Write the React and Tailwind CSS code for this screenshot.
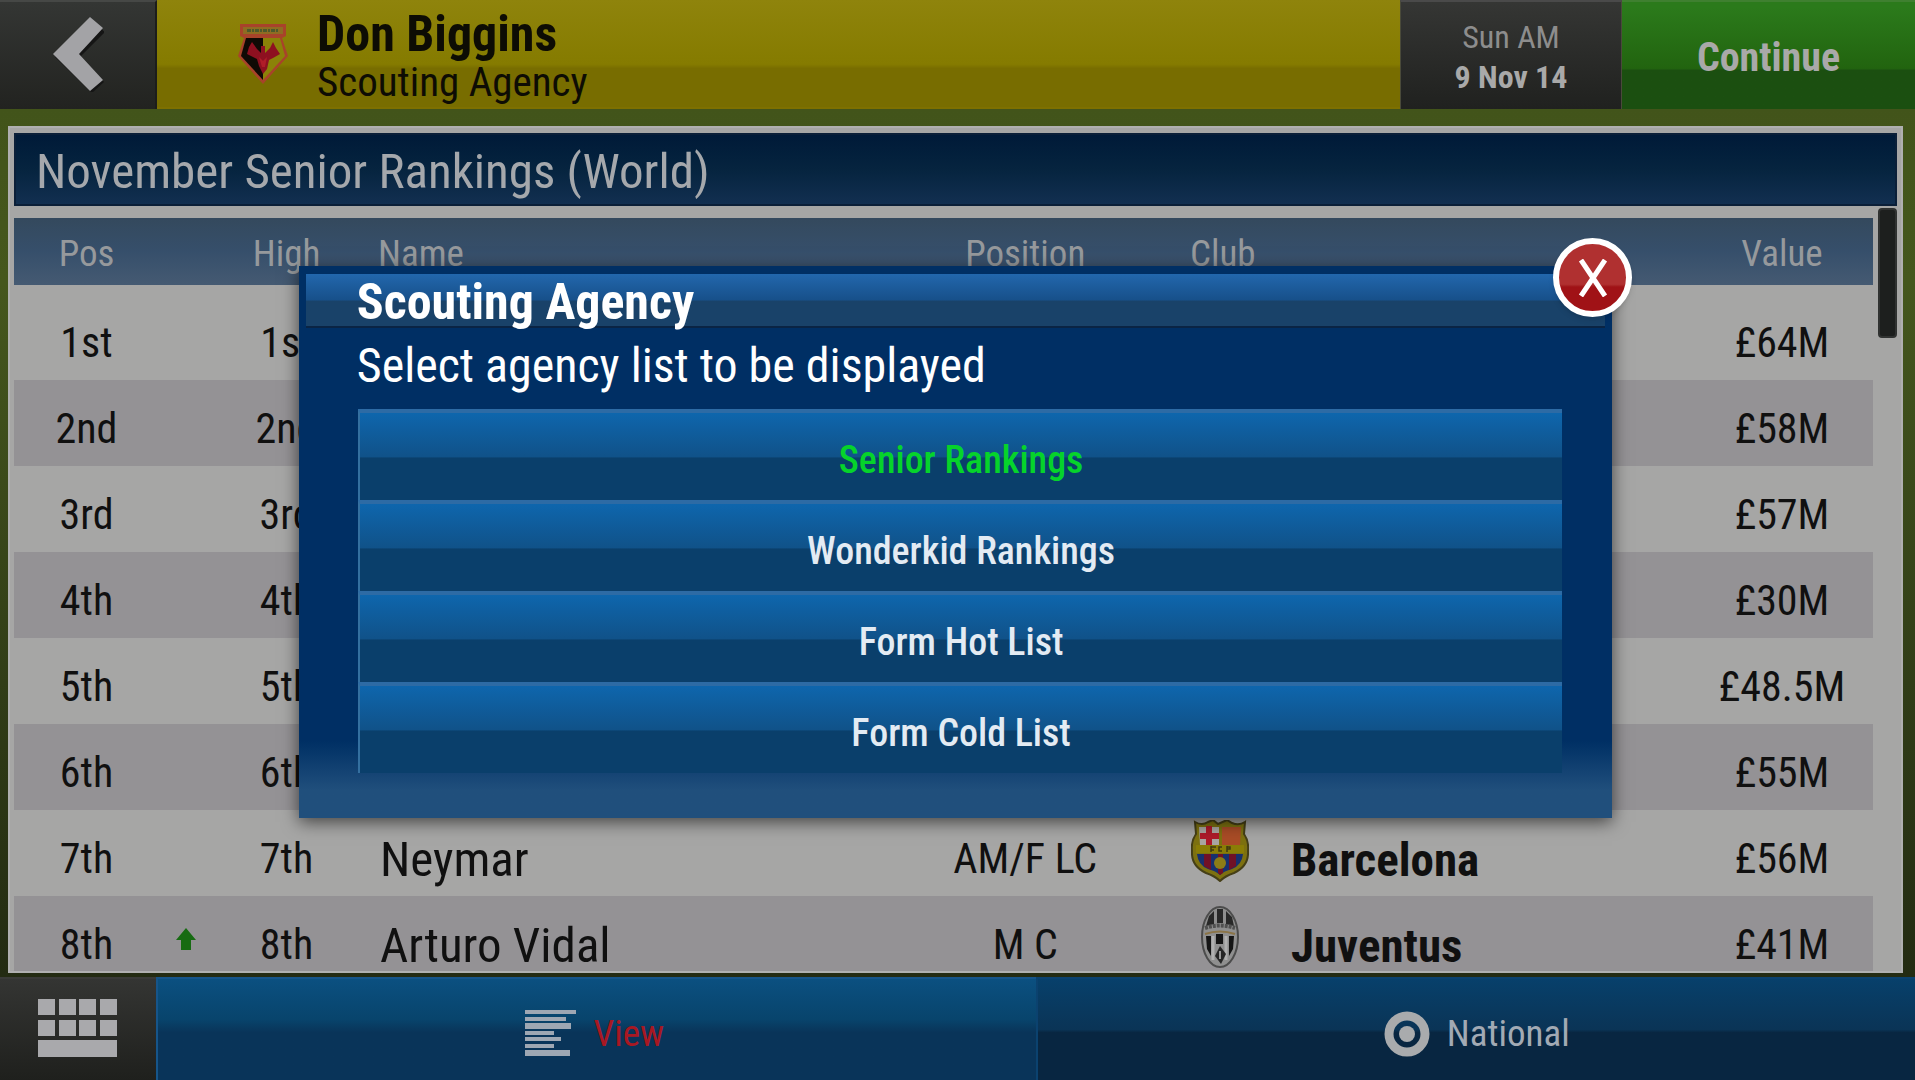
import { useState } from "react";

const players = [
  { pos: "1st", high: "1st", value: "£64M" },
  { pos: "2nd", high: "2nd", value: "£58M" },
  { pos: "3rd", high: "3rd", value: "£57M" },
  { pos: "4th", high: "4th", value: "£30M" },
  { pos: "5th", high: "5th", value: "£48.5M" },
  { pos: "6th", high: "6th", value: "£55M" },
  {
    pos: "7th",
    high: "7th",
    name: "Neymar",
    position: "AM/F LC",
    club: "Barcelona",
    Crest: BarcelonaCrest,
    value: "£56M",
  },
  {
    pos: "8th",
    up: true,
    high: "8th",
    name: "Arturo Vidal",
    position: "M C",
    club: "Juventus",
    Crest: JuventusCrest,
    value: "£41M",
  },
];

const lists = [
  "Senior Rankings",
  "Wonderkid Rankings",
  "Form Hot List",
  "Form Cold List",
];

function WatfordCrest() {
  return (
    <svg width="52" height="62" viewBox="0 0 52 62" aria-hidden="true">
      <path d="M3 1H49V13L45 15L51 33L26 61L1 33L7 15L3 13Z" fill="#a8432a" />
      <path d="M6 4H46V11H6Z" fill="#8f6c22" />
      <path d="M10 7.500H42" stroke="#4d5a2c" strokeWidth="3" strokeDasharray="4 1 2 1" />
      <path d="M9 15H26V57L4 33Z" fill="#100a05" />
      <path d="M26 15H43L48 33L26 57Z" fill="#8b8208" />
      <path
        d="M15 19L20 26L24 30V23H28V30L33 25L36 19L39 25L43 31L36 35L32 37L30 46L26 51L22 43L20 36L10 31L12 24Z"
        fill="#8e1020"
      />
      <path d="M22 34L26 38L30 34L28 44H25Z" fill="#b01c28" />
    </svg>
  );
}

function BarcelonaCrest() {
  return (
    <svg width="58" height="62" viewBox="0 0 58 62" aria-hidden="true">
      <path
        d="M4 2Q11 6 17 2L22 0L27 4L36 0L41 3Q48 6 54 2L53 14Q58 21 57 31Q58 46 43 53Q34 56 29 61Q24 56 15 53Q0 46 1 31Q0 21 5 14Z"
        fill="#7d7110"
        stroke="#453f17"
        strokeWidth="2"
      />
      <path d="M8 7H28V25H9Z" fill="#aaa6a2" />
      <path d="M15 6H21V13H28V19H21V25H15V19H9V13H15Z" fill="#ad1b2a" />
      <path d="M31 7H50L49 25H31Z" fill="#a94c26" />
      <path d="M5 25H53V33H5Z" fill="#8a7d06" />
      <path d="M20 27H25M20 30H23M20 26V32M31 27H28V31H31M36 26V32M36 27H39V29H36" stroke="#3f3a10" strokeWidth="1.500" fill="none" />
      <path d="M6 34H52Q51 45 41 49Q33 51 29 55Q25 51 17 49Q7 45 6 34Z" fill="#17306e" />
      <path d="M13 34H20V50L13 46ZM38 34H45V46L38 50ZM27 34H32V53L29 55L27 53Z" fill="#711126" />
      <circle cx="29" cy="43" r="6" fill="#8c7c16" />
    </svg>
  );
}

function JuventusCrest() {
  return (
    <svg width="38" height="62" viewBox="0 0 38 62" aria-hidden="true">
      <ellipse cx="19" cy="31" rx="18" ry="30" fill="#8f8f8f" stroke="#4c4c4c" strokeWidth="2" />
      <path d="M8 10L13 5V18L5 20ZM16 3H22V17H16ZM25 5L31 11L33 20L25 18Z" fill="#282828" />
      <path d="M4 22Q19 17 34 22" stroke="#505050" strokeWidth="4" strokeDasharray="3 1" fill="none" />
      <path d="M4 28Q19 23 34 28" stroke="#8b7447" strokeWidth="2" fill="none" />
      <path d="M5 30H10V50L6 43ZM15 28H22V38H15ZM28 30H33L32 43L28 50Z" fill="#151515" />
      <path d="M12 30V54M25 30V54" stroke="#b0b0b0" strokeWidth="3" />
      <path d="M19 40L25 48L20 58L14 50Z" fill="#262626" />
      <path d="M19 45V53" stroke="#999" strokeWidth="2" />
    </svg>
  );
}

function Header() {
  return (
    <header className="flex h-[109px] shrink-0 text-[#a9a9a9]">
      <button
        type="button"
        aria-label="Back"
        className="flex w-[157px] items-center justify-center border-t-2 border-r-2 border-t-[#464846] border-r-[#1c1d1b] bg-linear-to-b from-[#343634] to-[#222320] pb-1"
      >
        <svg width="52" height="76" viewBox="0 0 52 76" aria-hidden="true">
          <path d="M40 5L53 16L28 41L52 66L40 77L3 41Z" fill="#151515" />
          <path d="M38 1L51 12L27 38L51 64L38 75L1 38Z" fill="#a3a3a6" />
        </svg>
      </button>
      <div className="flex flex-1 items-center border-b-2 border-b-[#7e7000] bg-linear-to-b from-[#8f840c] via-[#857b00] via-60% to-[#786d00] to-64% pl-20 text-[#0d0c04]">
        <WatfordCrest />
        <div className="pt-2 pl-7">
          <h1 className="text-[50px] leading-[50px] font-bold">Don Biggins</h1>
          <p className="text-[41px] leading-[47px]">Scouting Agency</p>
        </div>
      </div>
      <div className="flex w-[222px] flex-col items-center justify-center border-t-2 border-x border-t-[#4a4a4a] border-x-[#4a4a3a] bg-linear-to-b from-[#353634] to-[#20211f] pt-[2px] text-[32px] leading-[40px]">
        <span className="text-[#8d8d8d]">Sun AM</span>
        <span className="font-bold">9 Nov 14</span>
      </div>
      <button
        type="button"
        className="w-[293px] border-t-2 border-t-[#3f8030] bg-linear-to-b from-[#2b7a1b] from-5% via-[#22640f] via-62% to-[#1b4f10] to-64% pt-1 text-[40px] font-bold"
      >
        Continue
      </button>
    </header>
  );
}

function Rankings() {
  return (
    <main className="min-h-0 flex-1 bg-linear-to-b from-[#42541a] via-[#45571d] via-20% to-[#232b12] pt-[17px] pr-3 pb-1 pl-2">
      <section className="flex h-full flex-col overflow-hidden border-2 border-[#b0b0b0] bg-[#a6a6a5] px-1 pt-[5px]">
        <h2 className="h-[73px] shrink-0 border-2 border-[#0b1f38] bg-linear-to-b from-[#001a38] via-[#06243f] to-[#122f50] px-5 text-[49px] leading-[74px] text-[#a5a8ac]">
          November Senior Rankings (World)
        </h2>
        <div className="flex min-h-0 flex-1 items-start gap-[5px] overflow-hidden">
          <table className="mt-3 w-full table-fixed border-collapse text-[42px] text-[#101010]">
            <colgroup>
              <col className="w-[145px]" />
              <col className="w-[54px]" />
              <col className="w-[147px]" />
              <col className="w-[28%]" />
              <col className="w-[16%]" />
              <col className="w-[101px]" />
              <col />
              <col className="w-[182px]" />
            </colgroup>
            <thead>
              <tr className="h-[67px] bg-linear-to-b from-[#34495d] via-[#364f6b] to-[#455a72] text-[37px] text-[#96999c]">
                <th className="p-0 pt-1 font-normal">Pos</th>
                <th className="p-0" aria-label="Movement" />
                <th className="p-0 pt-1 font-normal">High</th>
                <th className="p-0 pt-1 pl-[18px] text-left font-normal">Name</th>
                <th className="p-0 pt-1 pr-2 font-normal">Position</th>
                <th className="p-0 pt-1 pl-3 text-left font-normal" colSpan={2}>
                  Club
                </th>
                <th className="p-0 pt-1 font-normal">Value</th>
              </tr>
            </thead>
            <tbody className="before:block before:h-[9px] before:content-['']">
              {players.map((player) => (
                <tr key={player.pos} className="h-[86px] even:bg-[#949295]">
                  <td className="p-0 pt-[10px] text-center">{player.pos}</td>
                  <td className="p-0">
                    {player.up && (
                      <svg className="mx-auto" width="20" height="22" viewBox="0 0 20 22" role="img" aria-label="Up">
                        <path d="M10 0L20 12H15V22H5V12H0Z" fill="#176b12" />
                      </svg>
                    )}
                  </td>
                  <td className="p-0 pt-[10px] text-center">{player.high}</td>
                  <td className="p-0 pt-3 pl-5 text-[49px] leading-none">{player.name}</td>
                  <td className="p-0 pt-[10px] pr-2 text-center">{player.position}</td>
                  <td className="p-0 pb-1 pl-3">
                    <div className="flex w-[60px] justify-center">
                      {player.Crest && <player.Crest />}
                    </div>
                  </td>
                  <td className="p-0 pt-3 pl-3 text-[47px] leading-none font-bold">{player.club}</td>
                  <td className="p-0 pt-[10px] text-center">{player.value}</td>
                </tr>
              ))}
            </tbody>
          </table>
          <div className="mt-[2px] h-[130px] w-[19px] shrink-0 rounded-sm border-2 border-[#303231] bg-[#1d1f1e]" />
        </div>
      </section>
    </main>
  );
}

function Footer() {
  return (
    <footer className="grid h-[103px] shrink-0 grid-cols-[156px_1fr_1fr] text-[37px]">
      <button
        type="button"
        aria-label="Menu"
        className="flex items-center justify-center border-t-2 border-t-[#3a3b38] bg-linear-to-b from-[#343533] to-[#1f201d] pb-1"
      >
        <svg width="80" height="58" viewBox="0 0 80 58" fill="#a9a9ac" aria-hidden="true">
          {[0, 21, 41, 62].map((x) => (
            <g key={x}>
              <rect x={x} y="0" width="17" height="16" />
              <rect x={x} y="21" width="17" height="16" />
            </g>
          ))}
          <rect x="0" y="41" width="79" height="17" />
        </svg>
      </button>
      <button
        type="button"
        className="flex items-center justify-center gap-4 border-t-2 border-l-2 border-[#16558a] bg-linear-to-b from-[#0b5080] via-[#08446c] via-40% to-[#093459] to-53% pt-2 pr-1 text-[#a81822]"
      >
        <svg width="52" height="47" viewBox="0 0 52 47" fill="#9ea7b3" aria-hidden="true">
          <path d="M0 0H51V4H0ZM0 7H41V11H0ZM0 13H46V19H0ZM0 21H29V25H0ZM0 27H36V31H0ZM0 34H29V38H0ZM0 40H45V46H0Z" />
        </svg>
        View
      </button>
      <button
        type="button"
        className="flex items-center justify-center gap-4 border-t-2 border-l-2 border-[#0b426f] bg-linear-to-b from-[#07406b] via-[#0a3456] via-50% to-[#082641] to-53% pt-2 text-[#a2aab4]"
      >
        <svg width="48" height="48" viewBox="0 0 48 48" aria-hidden="true">
          <circle cx="24" cy="24" r="18" fill="none" stroke="#a9abad" strokeWidth="9" />
          <circle cx="24" cy="24" r="8" fill="#a9abad" />
        </svg>
        National
      </button>
    </footer>
  );
}

function AgencyDialog({ selected, onSelect, onClose }) {
  return (
    <div
      role="dialog"
      aria-modal="true"
      aria-labelledby="agency-title"
      className="absolute right-[15.8%] left-[15.6%] top-[266px] bg-linear-to-b from-[#002f64] from-86% to-[#204f7c] to-95% px-[7px] pt-2 pb-[45px] text-white shadow-[0_4px_16px_rgba(0,0,0,0.6)]"
    >
      <h2
        id="agency-title"
        className="h-[54px] border-b-2 border-b-[#0a2444] bg-linear-to-b from-[#2267ad] via-[#17508a] via-50% to-[#194269] to-52% pl-[51px] text-[50px] leading-[56px] font-bold"
      >
        Scouting Agency
      </h2>
      <p className="px-[51px] pt-[5px] pb-[10px] text-[48px] leading-[66px]">
        Select agency list to be displayed
      </p>
      <ul className="mr-[43px] ml-[52px]">
        {lists.map((list) => (
          <li key={list}>
            <button
              type="button"
              onClick={() => onSelect(list)}
              className={`h-[91px] w-full border-t-4 border-l-2 border-t-[#2d6ba5] border-l-[#3470a0] bg-linear-to-b from-[#0e66ad] via-[#105289] via-50% to-[#0a3f6b] to-52% pt-2 text-[38px] font-medium ${
                list === selected ? "text-[#06d32b]" : "text-[#e3ebf3]"
              }`}
            >
              {list}
            </button>
          </li>
        ))}
      </ul>
      <button
        type="button"
        aria-label="Close"
        onClick={onClose}
        className="absolute -top-7 -right-5 flex size-[79px] items-center justify-center rounded-full border-[6px] border-white bg-linear-to-b from-[#b03030] from-60% to-[#a01216] to-64% shadow-md"
      >
        <svg width="30" height="38" viewBox="0 0 30 38" aria-hidden="true">
          <path d="M3 1L27 37M27 1L3 37" stroke="#fff" strokeWidth="5" />
        </svg>
      </button>
    </div>
  );
}

export default function App() {
  const [open, setOpen] = useState(true);
  const [selected, setSelected] = useState("Senior Rankings");

  return (
    <div className="relative flex h-screen flex-col overflow-hidden bg-[#232b12] font-['Roboto_Condensed','Liberation_Sans_Narrow',Roboto,sans-serif]">
      <Header />
      <Rankings />
      <Footer />
      {open && (
        <AgencyDialog
          selected={selected}
          onSelect={setSelected}
          onClose={() => setOpen(false)}
        />
      )}
    </div>
  );
}
